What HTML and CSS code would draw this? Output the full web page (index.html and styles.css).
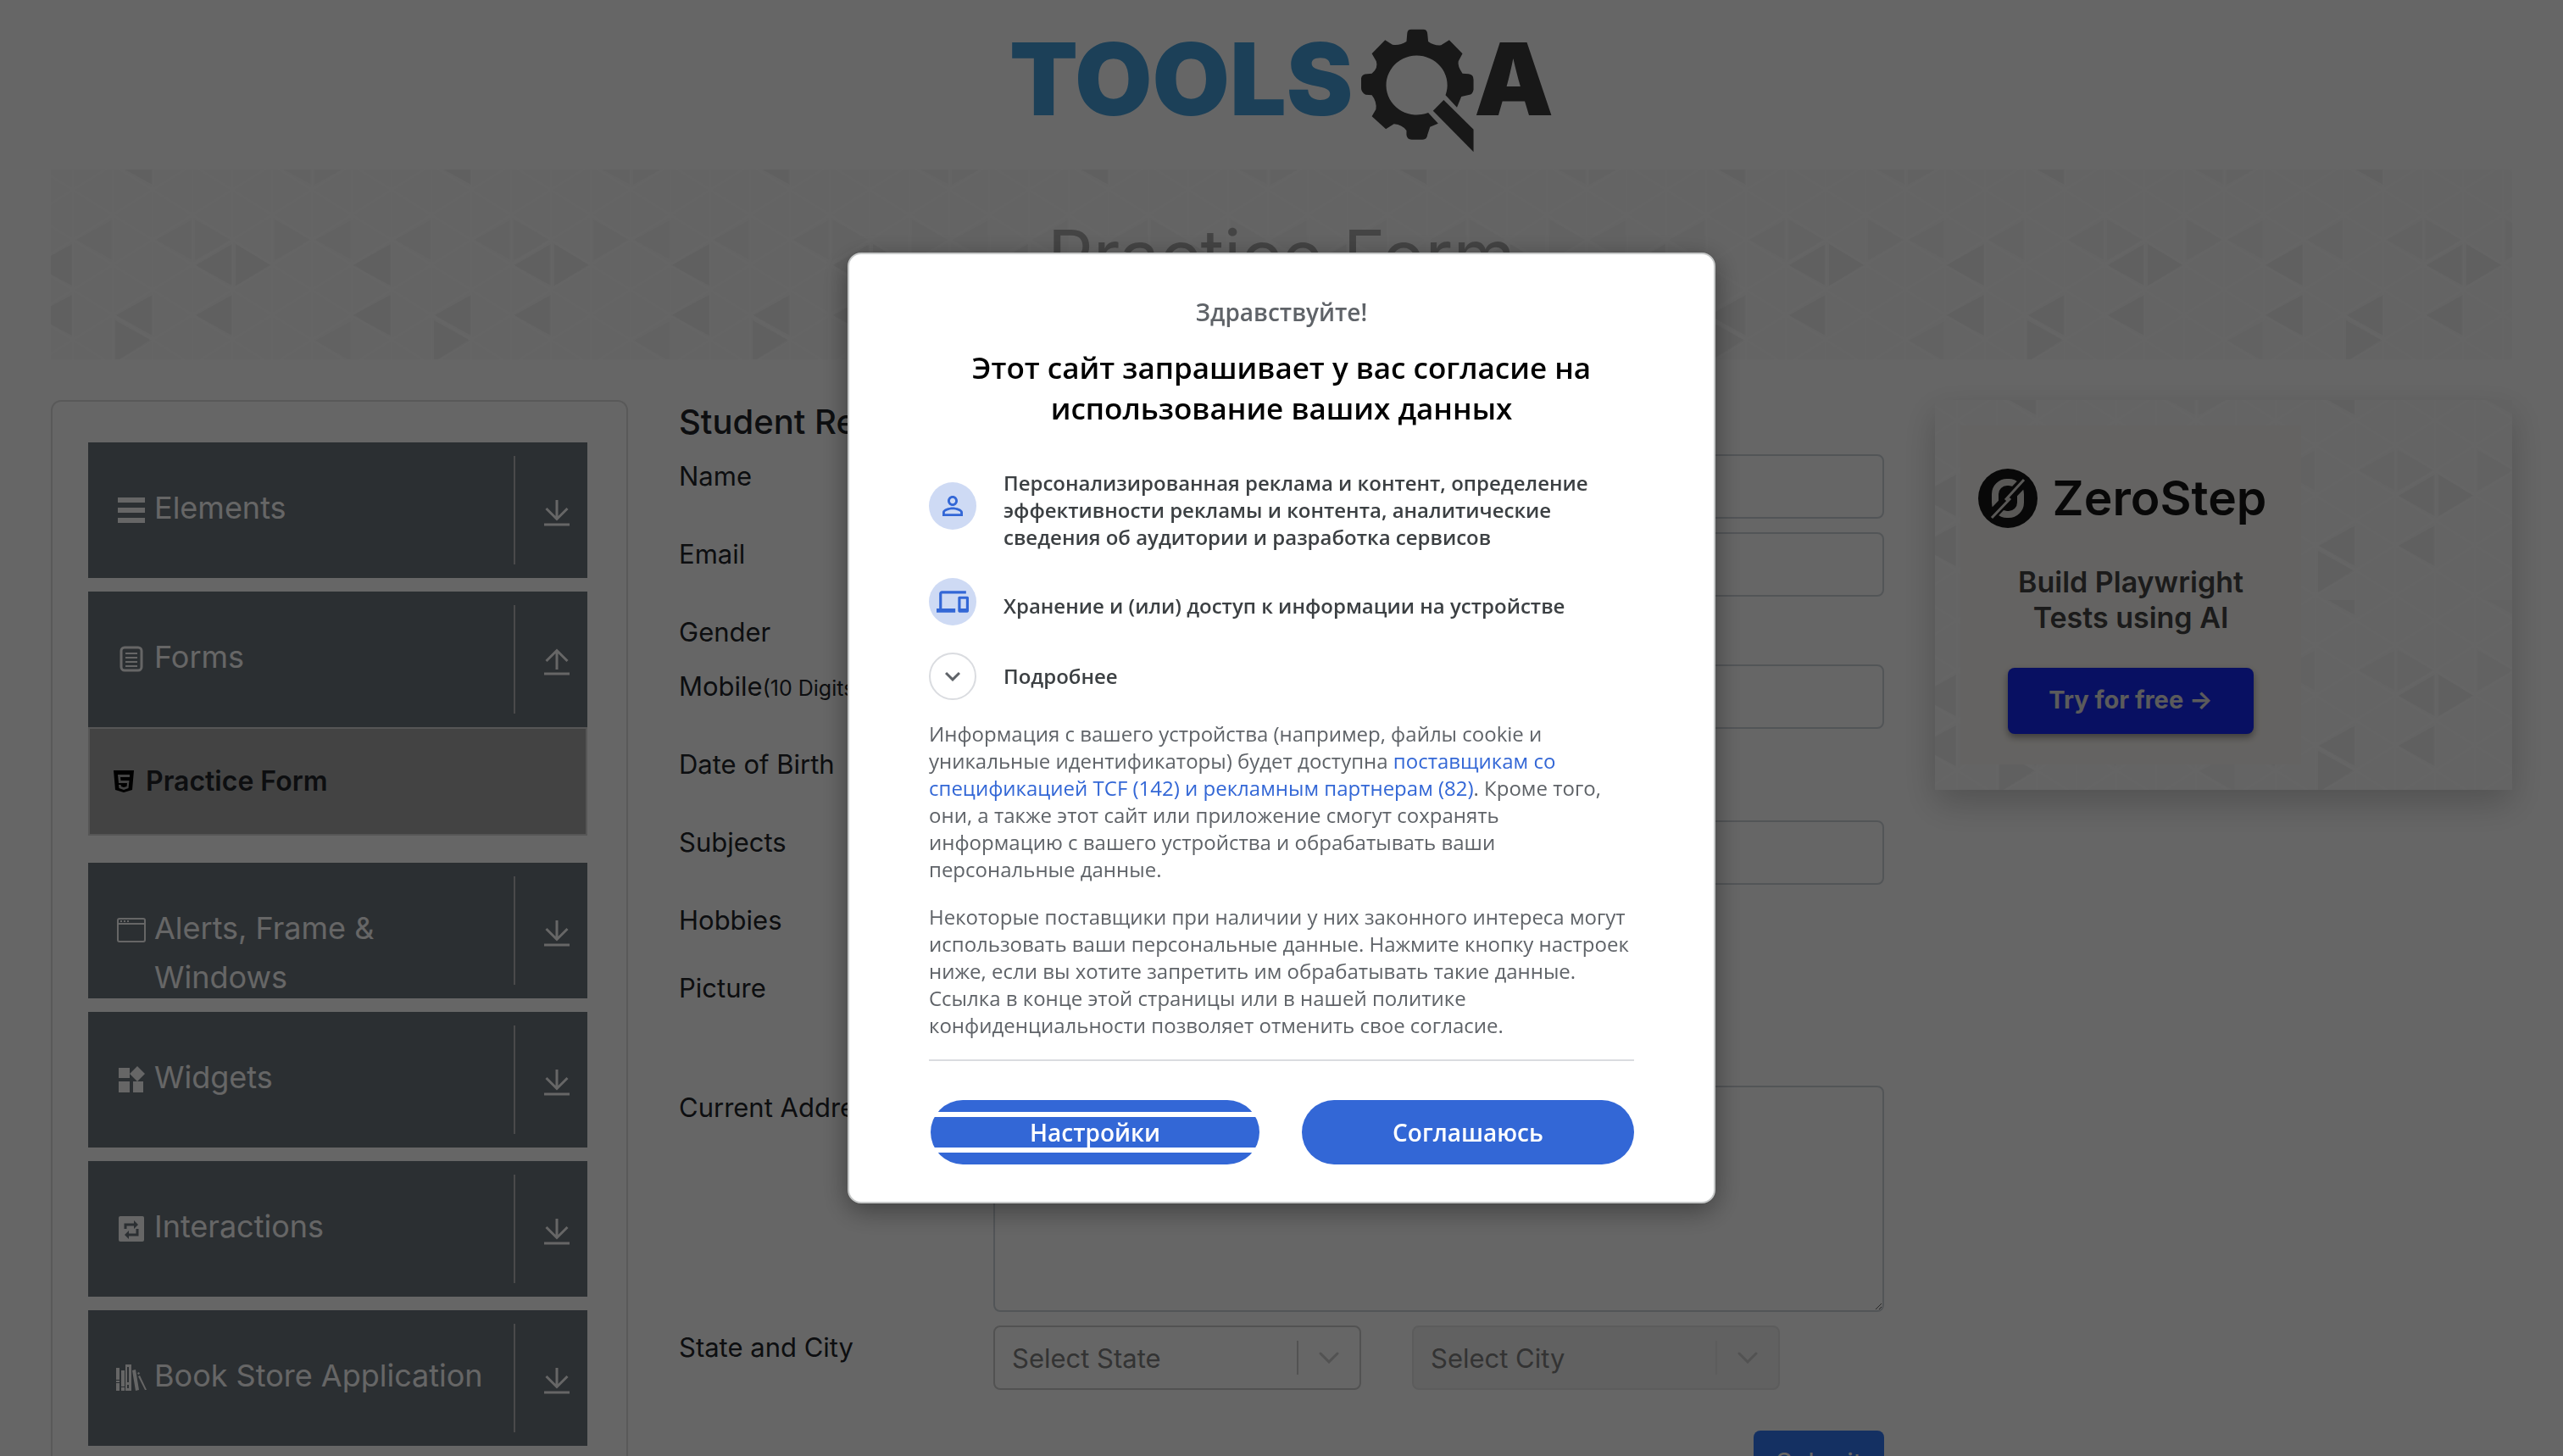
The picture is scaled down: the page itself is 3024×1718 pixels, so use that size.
FILE: index.html
```html
<!DOCTYPE html>
<html lang="en">
<head>
<meta charset="utf-8">
<title>DEMOQA</title>
<meta name="viewport" content="width=device-width, initial-scale=1">
<link rel="stylesheet" href="styles.css">
</head>
<body>
<svg class="defs" aria-hidden="true">
  <defs>
    <pattern id="lattice" width="94" height="59" x="26" y="24" patternUnits="userSpaceOnUse">
      <path d="M0 0V59M47 0V59M94 0V59M0 0L47 29.500L94 0M0 59L47 29.500L94 59" fill="none" stroke="#fff" stroke-width="3"/>
    </pattern>
    <pattern id="triangles" width="376" height="236" patternUnits="userSpaceOnUse">
      <rect width="376" height="236" fill="#fafafa"/>
      <g fill="#f0f0f0">
        <path d="M25 88V137L-20 113ZM25 148V196L-20 172ZM401 88V137L356 113ZM401 148V196L356 172Z"/>
        <path d="M214 88V137L171 113ZM218 88V137L260 113ZM120 148V196L77 172ZM214 148V196L171 172ZM76 178V227L119 202ZM120 -30V18L77 -6Z"/>
      </g>
      <g fill="#f6f6f6">
        <path d="M264 59V107L307 83ZM356 59V107L312 83ZM167 59V107L124 83ZM170 59V107L213 83ZM73 59V107L30 83ZM356 178V227L312 202ZM308 -30V18L264 -6ZM311 -30V18L354 -6Z"/>
      </g>
    </pattern>
    <symbol id="arrow-down" viewBox="0 0 30 32">
      <path d="M15 1V23M2.500 11L15 23.500L27.500 11M0 30H30" fill="none" stroke="currentColor" stroke-width="3"/>
    </symbol>
    <symbol id="arrow-up" viewBox="0 0 30 32">
      <path d="M15 25V3M2.500 15L15 2.500L27.500 15M0 30H30" fill="none" stroke="currentColor" stroke-width="3"/>
    </symbol>
    <symbol id="chevron" viewBox="0 0 24 14">
      <path d="M2 2L12 12L22 2" fill="none" stroke="currentColor" stroke-width="3" stroke-linecap="round"/>
    </symbol>
  </defs>
</svg>

<div class="page">
  <header class="site-header">
    <a class="logo" href="#" aria-label="TOOLSQA">
      <span class="logo-tools">TOOLS</span>
      <svg class="logo-gear" viewBox="993 40 306 438" preserveAspectRatio="none" aria-hidden="true">
        <path d="M1116 85L1118 55Q1119 42 1128 42H1162Q1172 42 1173 58L1175 85Q1190 100 1210 98L1232 80L1268 128L1257 155Q1254 172 1268 198L1285 200Q1298 202 1298 220V255Q1296 273 1285 274L1265 280L1253 318L1222 275A83 105 0 1 0 1175 337L1202 375L1180 387L1173 415Q1172 432 1160 432H1130Q1117 432 1116 415V400Q1105 380 1082 377L1060 395L1022 350L1033 325Q1036 298 1022 275L1005 273Q993 265 993 250V215Q995 200 1010 200L1022 198Q1040 180 1034 155L1022 128L1058 80L1078 96Q1098 100 1116 85Z"/>
        <path d="M1217 292L1298 396V476L1188 330Z"/>
      </svg>
      <span class="logo-a">A</span>
    </a>
  </header>

  <div class="banner">
    <svg class="texture" aria-hidden="true"><rect width="100%" height="100%" fill="url(#triangles)"/><rect width="100%" height="100%" fill="url(#lattice)" opacity=".45"/></svg>
    <h1>Practice Form</h1>
  </div>

  <div class="columns">
    <nav class="sidebar">
      <a class="group" href="#">
        <svg class="group-icon" viewBox="0 0 36 36"><path d="M2 3h32v6H2zM2 15h32v6H2zM2 27h32v6H2z"/></svg>
        <span class="group-name">Elements</span>
        <span class="group-toggle"><svg><use href="#arrow-down"/></svg></span>
      </a>
      <div class="open-group">
        <a class="group" href="#">
          <svg class="group-icon" viewBox="0 0 36 36"><rect x="6" y="4" width="24" height="27" rx="4" fill="none" stroke="currentColor" stroke-width="3"/><path d="M11 10h14v2H11zM11 15h14v2H11zM11 20h14v2H11zM11 25h14v2H11z"/></svg>
          <span class="group-name">Forms</span>
          <span class="group-toggle"><svg><use href="#arrow-up"/></svg></span>
        </a>
        <a class="entry" href="#">
          <svg class="entry-icon" viewBox="0 0 24 26"><path fill-rule="evenodd" d="M0 0H24L22 23L12 26L2 23ZM5 5L6 15H16L15.500 19L12 20L9 19L8.500 17H6L6.500 21L12 23L17.500 21L18.500 12H8.500L8 8H19V5Z"/></svg>
          <span>Practice Form</span>
        </a>
      </div>
      <a class="group" href="#">
        <svg class="group-icon" viewBox="0 0 36 36"><rect x="2" y="4" width="32" height="27" rx="2" fill="none" stroke="currentColor" stroke-width="2"/><path d="M2 9h32v2H2zM5 6h2v2H5zM9 6h2v2H9zM13 6h2v2h-2z"/></svg>
        <span class="group-name">Alerts, Frame &amp; Windows</span>
        <span class="group-toggle"><svg><use href="#arrow-down"/></svg></span>
      </a>
      <a class="group" href="#">
        <svg class="group-icon" viewBox="0 0 36 36"><path d="M3 4h13v12H3zM3 20h13v13H3zM20 20h12v13H20zM25 2l9 9l-9 9l-9-9z"/></svg>
        <span class="group-name">Widgets</span>
        <span class="group-toggle"><svg><use href="#arrow-down"/></svg></span>
      </a>
      <a class="group" href="#">
        <svg class="group-icon" viewBox="0 0 36 36"><rect x="3" y="3" width="30" height="30" rx="2"/><path d="M11 18v-5h12M25 18v7H13" fill="none" stroke="#6c757d" stroke-width="3"/><path d="M21 8l5 5l-5 5zM15 20l-5 5l5 5z" fill="#6c757d"/></svg>
        <span class="group-name">Interactions</span>
        <span class="group-toggle"><svg><use href="#arrow-down"/></svg></span>
      </a>
      <a class="group" href="#">
        <svg class="group-icon" viewBox="0 0 36 36"><path d="M0 6h4v14H0zM0 21h4v2H0zM0 24h4v9H0zM6 9h4v19H6zM6 29h4v4H6zM11 2h7v31h-7zM19 9l4-1l4 24l-4 1zM25 12l2-1l1 2l-2 1zM26 16l2-1l8 17h-2z"/><path d="M14 5v18M14 26v4" stroke="#6c757d" stroke-width="2"/></svg>
        <span class="group-name">Book Store Application</span>
        <span class="group-toggle"><svg><use href="#arrow-down"/></svg></span>
      </a>
    </nav>

    <main>
      <form>
        <h5>Student Registration Form</h5>
        <div class="row"><label for="name">Name</label><input id="name" type="text"></div>
        <div class="row"><label for="email">Email</label><input id="email" type="email"></div>
        <div class="row row-gender"><span>Gender</span></div>
        <div class="row"><label for="mobile">Mobile<small>(10 Digits)</small></label><input id="mobile" type="tel"></div>
        <div class="row"><label for="birth">Date of Birth</label><input id="birth" class="short" type="text"></div>
        <div class="row"><label for="subjects">Subjects</label><input id="subjects" type="text"></div>
        <div class="row row-hobbies"><span>Hobbies</span></div>
        <div class="row row-picture"><span>Picture</span></div>
        <div class="row"><label for="address">Current Address</label><textarea id="address"></textarea></div>
        <div class="row">
          <label for="state">State and City</label>
          <div class="selects">
            <div class="select"><select id="state"><option>Select State</option></select><svg><use href="#chevron"/></svg></div>
            <div class="select select-off"><select aria-label="City" disabled><option>Select City</option></select><svg><use href="#chevron"/></svg></div>
          </div>
        </div>
        <div class="actions"><button class="submit" type="button">Submit</button></div>
      </form>
    </main>

    <aside class="promo">
      <svg class="texture" aria-hidden="true"><rect width="100%" height="100%" fill="url(#triangles)"/><rect width="100%" height="100%" fill="url(#lattice)" opacity=".45"/></svg>
      <div class="ad">
        <div class="ad-brand">
          <svg viewBox="0 0 70 72" aria-hidden="true">
            <circle cx="35" cy="36" r="35" fill="#141414"/>
            <rect x="20" y="17" width="30" height="38" rx="14" fill="none" stroke="#dedbd7" stroke-width="8"/>
            <path d="M14 58L56 14" stroke="#141414" stroke-width="12"/>
            <path d="M16 59L38 36M32 38L54 14" stroke="#dedbd7" stroke-width="3"/>
          </svg>
          <span>ZeroStep</span>
        </div>
        <p>Build Playwright<br>Tests using AI</p>
        <button class="ad-button" type="button">Try for free →</button>
      </div>
    </aside>
  </div>
</div>

<div class="overlay">
  <section class="dialog" role="dialog" aria-labelledby="consent-title" lang="ru">
    <p class="hello">Здравствуйте!</p>
    <h2 id="consent-title">Этот сайт запрашивает у вас согласие на использование ваших данных</h2>
    <ul class="purposes">
      <li>
        <span class="disc"><svg viewBox="0 0 24 24"><path d="M12 5.900c1.160 0 2.100.94 2.100 2.100s-.94 2.100-2.100 2.100S9.900 9.160 9.900 8s.94-2.100 2.100-2.100m0 9c2.970 0 6.100 1.460 6.100 2.100v1.100H5.900V17c0-.64 3.130-2.100 6.100-2.100M12 4C9.790 4 8 5.790 8 8s1.790 4 4 4 4-1.790 4-4-1.790-4-4-4zm0 9c-2.670 0-8 1.340-8 4v3h16v-3c0-2.660-5.330-4-8-4z"/></svg></span>
        <span class="purpose">Персонализированная реклама и контент, определение эффективности рекламы и контента, аналитические сведения об аудитории и разработка сервисов</span>
      </li>
      <li>
        <span class="disc"><svg class="wide" viewBox="0 0 24 24"><path d="M4 6h18V4H4c-1.100 0-2 .9-2 2v11H0v3h14v-3H4V6zm19 2h-6c-.55 0-1 .45-1 1v10c0 .55.45 1 1 1h6c.55 0 1-.45 1-1V9c0-.55-.45-1-1-1zm-1 9h-4v-7h4v7z"/></svg></span>
        <span class="purpose">Хранение и (или) доступ к информации на устройстве</span>
      </li>
      <li>
        <button class="more" type="button"><span class="disc disc-open"><svg viewBox="0 0 24 24"><path d="M7.410 8.590L12 13.170l4.590-4.580L18 10l-6 6-6-6z"/></svg></span><span>Подробнее</span></button>
      </li>
    </ul>
    <div class="details">
      <p>Информация с вашего устройства (например, файлы cookie и уникальные идентификаторы) будет доступна <a href="#">поставщикам со спецификацией TCF (142) и рекламным партнерам (82)</a>. Кроме того, они, а также этот сайт или приложение смогут сохранять информацию с вашего устройства и обрабатывать ваши персональные данные.</p>
      <p>Некоторые поставщики при наличии у них законного интереса могут использовать ваши персональные данные. Нажмите кнопку настроек ниже, если вы хотите запретить им обрабатывать такие данные. Ссылка в конце этой страницы или в нашей политике конфиденциальности позволяет отменить свое согласие.</p>
    </div>
    <div class="choices">
      <button class="choice choice-focus" type="button">Настройки</button>
      <button class="choice" type="button">Соглашаюсь</button>
    </div>
  </section>
</div>
</body>
</html>
```
FILE: styles.css
```css
* { box-sizing: border-box; }
html, body { height: 100%; }
body {
  margin: 0;
  overflow: hidden;
  background: #fff;
  color: #212529;
  font: 400 31px/48px Inter, "Liberation Sans", sans-serif;
}
h1, h2, h5, p, ul { margin: 0; padding: 0; font-weight: 400; }
a { color: inherit; text-decoration: none; }
button, input, select, textarea { font: inherit; color: inherit; }
.defs { position: absolute; width: 0; height: 0; }
.page { padding: 0 60px; }

.site-header { display: flex; justify-content: center; padding: 34px 0 20px; }
.logo { display: flex; height: 146px; font-size: 118px; line-height: 118px; font-weight: 900; }
.logo-tools { color: #46a0dc; }
.logo-gear { width: 133px; height: 146px; margin-left: 10px; fill: #3d3d3d; }
.logo-a { color: #3d3d3d; }

.banner { position: relative; height: 224px; padding-top: 54px; text-align: center; }
.texture { position: absolute; inset: 0; width: 100%; height: 100%; }
.banner h1 { position: relative; color: #aaa; font-size: 84px; line-height: 96px; font-weight: 400; }

.columns {
  display: grid;
  grid-template-columns: 681fr 1422fr 681fr;
  gap: 60px;
  align-items: start;
  padding-top: 48px;
}

.sidebar {
  display: flex;
  flex-direction: column;
  gap: 16px;
  padding: 48px 46px 200px 42px;
  border: 2px solid #dfdfdf;
  border-radius: 12px;
}
.group {
  display: flex;
  gap: 9px;
  height: 160px;
  padding: 16px 21px 0 33px;
  overflow: hidden;
  background: #6c757d;
  color: #fff;
  fill: currentColor;
  font-size: 36px;
  line-height: 58px;
}
.group-icon { flex: none; width: 36px; height: 36px; margin-top: 46px; }
.group-name { flex: 1; padding-top: 32px; }
.group-toggle { display: flex; align-items: center; height: 128px; padding: 6px 0 0 36px; background: linear-gradient(#b8babc, #b8babc) left / 2px 100% no-repeat; }
.group-toggle svg { width: 30px; height: 32px; }
.open-group { margin-bottom: 16px; }
.entry {
  display: flex;
  align-items: center;
  gap: 14px;
  height: 128px;
  padding-left: 28px;
  border: 2px solid #d8d8d8;
  background: #a8a8a8;
  font-size: 32px;
  font-weight: 600;
}
.entry-icon { width: 24px; height: 28px; }

h5 { padding-top: 2px; margin-bottom: 14px; font-size: 40px; line-height: 48px; font-weight: 500; }
.row { display: grid; grid-template-columns: 371fr 1051fr; align-items: start; margin-bottom: 16px; }
.row > label, .row > span { padding-top: 2px; }
.row-gender { height: 48px; }
.row-hobbies { min-height: 64px; }
.row-picture { min-height: 125px; }
small { font-size: 25px; }
input, textarea { width: 100%; height: 76px; padding: 12px 24px; border: 2px solid #ced4da; border-radius: 8px; background: #fff; }
input.short { width: 60%; }
textarea { display: block; height: 267px; }
.selects { display: flex; gap: 60px; }
.select {
  display: flex;
  align-items: center;
  width: 434px;
  height: 76px;
  padding-right: 24px;
  border: 2px solid #ccc;
  border-radius: 8px;
  color: #808080;
}
.select select { flex: 1; align-self: stretch; padding: 2px 20px 0; border: 0; background: linear-gradient(#ccc, #ccc) right / 2px 40px no-repeat; appearance: none; opacity: 1; color: #808080; }
.select svg { width: 24px; height: 14px; margin-left: 24px; color: #ccc; }
.select-off { border-color: #e6e6e6; background: #f2f2f2; }
.select-off select { background-image: linear-gradient(#e6e6e6, #e6e6e6); }
.actions { display: flex; justify-content: flex-end; padding-top: 32px; }
.submit { height: 76px; padding: 0 26px; border: 0; border-radius: 8px; background: #3478f5; color: #fff; }

.promo { position: relative; height: 460px; padding: 30px; border-radius: 4px; box-shadow: 0 16px 40px rgba(0, 0, 0, .2); }
.ad {
  position: relative;
  display: flex;
  flex-direction: column;
  align-items: center;
  width: 402px;
  height: 400px;
  padding-top: 50px;
  background: #fbf8f4;
}
.ad-brand { display: flex; align-items: center; gap: 18px; padding-right: 20px; color: #141414; font-size: 57px; line-height: 72px; font-weight: 600; }
.ad-brand svg { width: 70px; height: 72px; }
.ad p { padding-top: 42px; color: #444; font-size: 34px; line-height: 42px; font-weight: 600; text-align: center; }
.ad-button {
  width: 290px;
  height: 78px;
  padding-bottom: 4px;
  margin-top: 38px;
  border: 0;
  border-radius: 8px;
  background: #1428f5;
  box-shadow: 0 4px 8px rgba(0, 0, 0, .4);
  color: #e4e4e4;
  font-size: 29px;
  font-weight: 700;
}

.overlay { position: fixed; inset: 0; display: flex; align-items: center; justify-content: center; background: rgba(0, 0, 0, .6); }
.dialog {
  width: 1024px;
  padding: 44px 94px;
  border: 2px solid #c6c8c8;
  border-radius: 16px;
  background: #fff;
  box-shadow: 0 8px 32px rgba(0, 0, 0, .4);
  color: #3c4043;
  font-family: "Open Sans", "Noto Sans", sans-serif;
  font-size: 24px;
  line-height: 32px;
}
.hello { color: #5f6368; font-size: 28px; line-height: 48px; font-weight: 600; text-align: center; }
.dialog h2 { padding-top: 18px; color: #000; font-size: 35px; line-height: 48px; font-weight: 600; text-align: center; }
.purposes { display: flex; flex-direction: column; gap: 32px; padding: 38px 0 24px; list-style: none; font-weight: 600; }
.purposes li { display: flex; align-items: center; gap: 32px; }
.purpose { padding: 10px 32px 0 0; }
.disc { display: flex; flex: none; align-items: center; justify-content: center; width: 56px; height: 56px; border-radius: 50%; background: #cedaf4; fill: #3367d6; }
.disc svg { width: 36px; height: 36px; }
.disc .wide { width: 38px; height: 38px; }
.disc-open { border: 2px solid #dadce0; background: none; fill: #5f6368; }
.more { display: flex; align-items: center; gap: 32px; padding: 0; border: 0; background: none; }
.details { display: flex; flex-direction: column; gap: 24px; padding-bottom: 24px; border-bottom: 2px solid #dadce0; color: #5f6368; }
.details a { color: #3367d6; font-weight: 500; }
.choices { display: grid; grid-template-columns: 1fr 1fr; gap: 48px; padding-top: 46px; }
.choice { height: 76px; border: 0; border-radius: 38px; background: #3367d6; color: #fff; font-size: 28px; font-weight: 600; }
.choice-focus { margin: 0 2px; background: linear-gradient(#3367d6 14px, #fff 14px 20px, #3367d6 20px 56px, #fff 56px 62px, #3367d6 62px); }
```
